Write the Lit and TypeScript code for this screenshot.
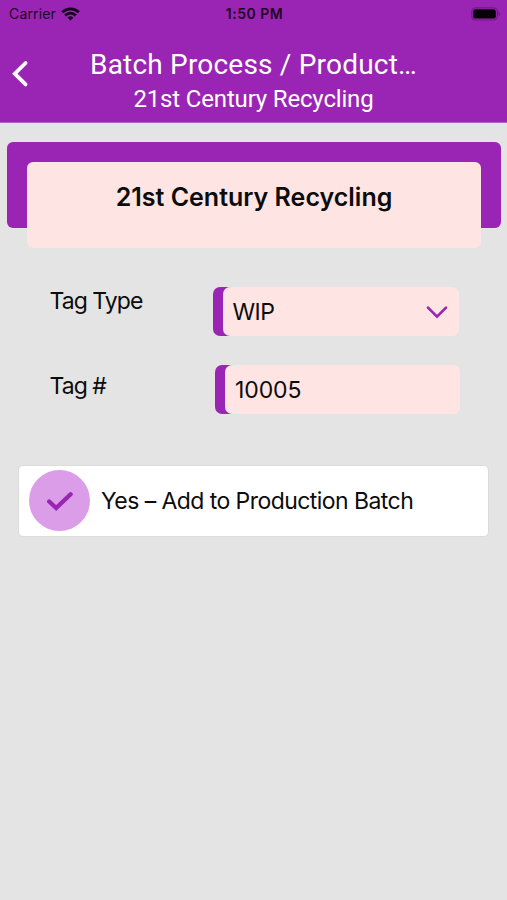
import { LitElement, html, css } from "lit";
import { customElement } from "lit/decorators.js";

@customElement("app-root")
export class AppRoot extends LitElement {
  static styles = css`
    :host {
      display: block;
      box-sizing: border-box;
      width: 100%;
      height: 900px;
      overflow: hidden;
      background: #e4e4e4;
      color: #0c0c0c;
      font-family: Inter, "Liberation Sans", sans-serif;
      white-space: nowrap;
    }
    .header {
      box-sizing: border-box;
      height: 123px;
      background: #9a25b4;
      border-bottom: 1px solid #b263c6;
    }
    .status {
      display: grid;
      grid-template-columns: 1fr auto 1fr;
      align-items: center;
      height: 27px;
      padding: 0 6px 0 9px;
      font-size: 14px;
      color: #1d0524;
    }
    .carrier {
      display: flex;
      align-items: center;
      gap: 5px;
      letter-spacing: 0.15px;
    }
    .time {
      font-weight: 600;
      letter-spacing: 0.5px;
      margin-right: 1px;
    }
    .battery {
      justify-self: end;
    }
    svg {
      display: block;
    }
    .nav {
      display: grid;
      grid-template-columns: 48px 1fr 48px;
      height: 95px;
    }
    .back {
      padding: 33px 0 0 11px;
    }
    .titles {
      padding-top: 21px;
      text-align: center;
      font-family: Roboto, sans-serif;
      color: #fff;
    }
    .title {
      font-size: 28px;
      line-height: 34px;
      letter-spacing: 0.2px;
    }
    .subtitle {
      font-size: 24px;
      line-height: 35px;
      letter-spacing: -0.17px;
    }
    .banner {
      height: 86px;
      margin: 19px 6px 0 7px;
      border-radius: 6px;
      background: #9a25b4;
      padding: 20px 20px 0;
      box-sizing: border-box;
    }
    .banner-card {
      height: 86px;
      border-radius: 6px;
      background: #fee5e4;
      text-align: center;
      font-size: 25px;
      line-height: 71px;
      font-weight: 600;
    }
    .row {
      display: flex;
      justify-content: space-between;
      padding: 0 48px 0 50px;
      font-size: 23px;
    }
    .row.type {
      margin-top: 59px;
    }
    .row.number {
      margin-top: 29px;
      padding-right: 47px;
    }
    .label {
      line-height: 30px;
      letter-spacing: -0.95px;
      text-indent: -0.5px;
    }
    .type .label {
      line-height: 29px;
    }
    .number .label {
      padding-top: 6px;
    }
    .field {
      display: flex;
      box-sizing: border-box;
      height: 49px;
      padding-left: 10px;
      border-radius: 7px;
      background: linear-gradient(to right, #9a25b4 18px, #fee5e4 18px);
    }
    .value {
      display: flex;
      flex: 1;
      align-items: center;
      justify-content: space-between;
      padding: 0 11px 0 10px;
      border-radius: 7px;
      background: #fee5e4;
      letter-spacing: -0.1px;
    }
    .type .field {
      width: 246.5px;
    }
    .type .value {
      letter-spacing: -0.6px;
    }
    .number .field {
      width: 245px;
    }
    .confirm {
      display: flex;
      align-items: center;
      gap: 11px;
      box-sizing: border-box;
      height: 72px;
      margin: 51px 18px 0;
      padding: 0 0 1px 10px;
      border: 1px solid #dcdcdc;
      border-radius: 5px;
      background: #fff;
      font-size: 23px;
      letter-spacing: -0.56px;
    }
    .check {
      display: grid;
      place-items: center;
      width: 61px;
      height: 61px;
      border-radius: 50%;
      background: #db9ce8;
    }
  `;

  render() {
    return html`
      <div class="header">
        <div class="status">
          <div class="carrier">
            <span>Carrier</span>
            <svg width="19" height="14" viewBox="0 0 19 14" fill="none" stroke="#14031a" stroke-width="2.8">
              <path d="M1.2 5.2a11.8 11.8 0 0 1 16.6 0" />
              <path d="M4.2 8.4a7.5 7.5 0 0 1 10.6 0" />
              <path d="M9.5 13.6 6.6 10.7a4.1 4.1 0 0 1 5.8 0z" fill="#14031a" stroke="none" />
            </svg>
          </div>
          <span class="time">1:50 PM</span>
          <svg class="battery" width="30" height="14" viewBox="0 0 30 14">
            <rect x="0.8" y="0.8" width="25.6" height="12.2" rx="3.6" fill="none" stroke="#701a84" stroke-width="1.2" />
            <rect x="2.2" y="2.2" width="22.6" height="9.4" rx="2.2" fill="#08010a" />
            <path d="M27.6 4.8q1.7.6 1.7 2.1t-1.7 2.1z" fill="#701a84" />
          </svg>
        </div>
        <div class="nav">
          <svg class="back" width="18" height="28" viewBox="0 0 18 28" fill="none" stroke="#fff" stroke-width="3.8" stroke-linecap="round" stroke-linejoin="miter">
            <path d="M14.6 3 3.8 13.7 14.6 24.4" />
          </svg>
          <div class="titles">
            <div class="title">Batch Process / Product…</div>
            <div class="subtitle">21st Century Recycling</div>
          </div>
        </div>
      </div>
      <div class="banner"><div class="banner-card">21st Century Recycling</div></div>
      <div class="row type">
        <span class="label">Tag Type</span>
        <div class="field">
          <div class="value">
            <span>WIP</span>
            <svg width="22" height="14" viewBox="0 0 22 14" fill="none" stroke="#9a25b4" stroke-width="2.7" stroke-linecap="round">
              <path d="M2 2.6 11 11.6 20 2.6" />
            </svg>
          </div>
        </div>
      </div>
      <div class="row number">
        <span class="label">Tag #</span>
        <div class="field"><div class="value">10005</div></div>
      </div>
      <div class="confirm">
        <div class="check">
          <svg width="28" height="22" viewBox="0 0 28 22" fill="none" stroke="#9a25b4" stroke-width="4.3" stroke-linecap="round">
            <path d="M3.2 11.5 10.2 18 24.6 4.2" />
          </svg>
        </div>
        <span class="prompt">Yes – Add to Production Batch</span>
      </div>
    `;
  }
}
